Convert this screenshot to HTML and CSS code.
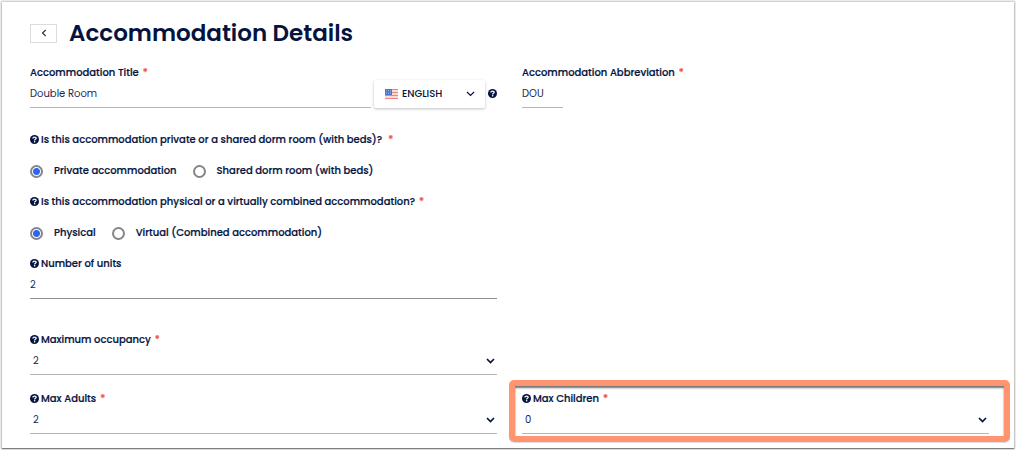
FILE: index.html
```html
<!DOCTYPE html>
<html lang="en">
<head>
<meta charset="utf-8">
<meta name="viewport" content="width=device-width, initial-scale=1">
<title>Accommodation Details</title>
<link rel="stylesheet" href="styles.css">
</head>
<body>
<svg class="defs" aria-hidden="true">
  <symbol id="help" viewBox="0 0 16 16">
    <circle cx="8" cy="8" r="8" fill="#05143f"/>
    <path d="M5 6.300C5.100 4.400 6.400 3.600 8.100 3.600c1.700 0 2.900.9 2.900 2.300C11 7.700 8.200 7.600 8.200 9.600" fill="none" stroke="#fff" stroke-width="2.300"/>
    <rect x="7" y="10.800" width="2.400" height="2.400" fill="#fff"/>
  </symbol>
  <symbol id="chevron" viewBox="0 0 9 6">
    <path d="M1 1l3.500 3.500L8 1" fill="none" stroke="currentColor" stroke-width="1.700"/>
  </symbol>
</svg>
<main class="panel">
  <header class="header">
    <button class="back" type="button" aria-label="Back">
      <svg class="back-icon" viewBox="0 0 6 8"><path d="M4.700 1L1.500 4l3.200 3" fill="none" stroke="#222b45" stroke-width="1.100"/></svg>
    </button>
    <h1 class="title">Accommodation Details</h1>
  </header>
  <form class="form">
    <div class="row">
      <div class="field">
        <label class="label" for="title">Accommodation Title <span class="req">*</span></label>
        <div class="title-line">
          <input class="input" id="title" type="text" value="Double Room">
          <button class="lang" type="button">
            <svg class="flag" viewBox="0 0 13 10">
              <rect width="13" height="10" fill="#f9dcd6"/>
              <path d="M0 .5h13M0 3.500h13M0 6.500h13M0 9.500h13" stroke="#ec8580"/>
              <rect width="7" height="6" fill="#4a74cf"/>
              <path d="M1 1.500h5M1 3h5M1 4.500h5" stroke="#9db4e6" stroke-width=".7" stroke-dasharray="1 1"/>
            </svg>
            <span class="lang-name">ENGLISH</span>
            <svg class="chevron" viewBox="0 0 9 6"><path d="M1 1l3.500 3.500L8 1" fill="none" stroke="currentColor" stroke-width="1.200"/></svg>
          </button>
          <svg class="help"><use href="#help"/></svg>
        </div>
      </div>
      <div class="field">
        <label class="label" for="abbr">Accommodation Abbreviation <span class="req">*</span></label>
        <input class="input short" id="abbr" type="text" value="DOU">
      </div>
    </div>

    <fieldset class="group first">
      <legend class="label"><svg class="help"><use href="#help"/></svg>Is this accommodation private or a shared dorm room (with beds)? <span class="req far">*</span></legend>
      <div class="options">
        <label class="option"><input class="radio" type="radio" name="kind" checked>Private accommodation</label>
        <label class="option"><input class="radio" type="radio" name="kind">Shared dorm room (with beds)</label>
      </div>
    </fieldset>
    <fieldset class="group">
      <legend class="label"><svg class="help"><use href="#help"/></svg>Is this accommodation physical or a virtually combined accommodation? <span class="req">*</span></legend>
      <div class="options">
        <label class="option"><input class="radio" type="radio" name="mode" checked>Physical</label>
        <label class="option"><input class="radio" type="radio" name="mode">Virtual (Combined accommodation)</label>
      </div>
    </fieldset>

    <div class="row units">
      <div class="field">
        <label class="label" for="units"><svg class="help"><use href="#help"/></svg>Number of units</label>
        <input class="input dark" id="units" type="text" inputmode="numeric" value="2">
      </div>
    </div>
    <div class="row occupancy">
      <div class="field">
        <label class="label" for="occupancy"><svg class="help"><use href="#help"/></svg>Maximum occupancy <span class="req">*</span></label>
        <div class="select-wrap">
          <select class="select" id="occupancy"><option>1</option><option selected>2</option><option>3</option></select>
          <svg class="chevron"><use href="#chevron"/></svg>
        </div>
      </div>
    </div>
    <div class="row guests">
      <div class="field">
        <label class="label" for="adults"><svg class="help"><use href="#help"/></svg>Max Adults <span class="req">*</span></label>
        <div class="select-wrap">
          <select class="select" id="adults"><option>1</option><option selected>2</option></select>
          <svg class="chevron"><use href="#chevron"/></svg>
        </div>
      </div>
      <div class="field highlight">
        <label class="label" for="children"><svg class="help"><use href="#help"/></svg>Max Children <span class="req">*</span></label>
        <div class="select-wrap">
          <select class="select" id="children"><option selected>0</option><option>1</option><option>2</option></select>
          <svg class="chevron"><use href="#chevron"/></svg>
        </div>
      </div>
    </div>
  </form>
</main>
</body>
</html>
```

FILE: styles.css
```css
* { box-sizing: border-box; }

body {
  margin: 0;
  padding: 2px;
  background: #fff;
  color: #05143f;
  font: 500 10px/16px Poppins, Inter, "Open Sans", sans-serif;
}

.defs { position: absolute; width: 0; height: 0; }

.panel {
  padding: 16px 25px 14px 28px;
  background: #fff;
  box-shadow: 0 0 2px 1px rgba(0, 0, 0, .25), 0 1px 1px rgba(0, 0, 0, .4);
}

.header { display: flex; align-items: center; gap: 12px; margin-bottom: 16px; }

.back {
  display: flex;
  align-items: center;
  justify-content: center;
  width: 27px;
  height: 19px;
  padding: 0;
  border: 1px solid #dcdcdc;
  background: #fff;
}
.back-icon { width: 6px; height: 8px; }

.title { margin: 0; padding-top: 1px; font-size: 23px; line-height: 29px; font-weight: 600; }

.row { display: grid; grid-template-columns: 1fr 1fr; gap: 25px; }
.units { margin-top: 14px; }
.occupancy { margin-top: 32px; }
.guests { margin-top: 15px; }

.field { position: relative; min-width: 0; }

.label {
  display: flex;
  align-items: center;
  height: 16px;
  padding: 2px 0 0;
  font-weight: 500;
  -webkit-text-stroke: 0.2px currentColor;
  white-space: nowrap;
}
.help { flex: none; width: 9px; height: 9px; margin: 0 2px 2px 0; }
.req { margin-left: 4px; color: #f0524f; }
.far { margin-left: 6px; }

.title-line { display: flex; align-items: center; gap: 3px; }
.title-line .input { flex: 1; min-width: 0; }
.title-line .help { margin: 0 0 2px; }

.input, .select {
  display: block;
  width: 100%;
  height: 28px;
  padding: 0;
  border: 0;
  border-bottom: 1px solid #b5b5b5;
  border-radius: 0;
  background: transparent;
  color: #1b2850;
  font: inherit;
  font-weight: 400;
}
.short { width: 41px; }
.dark { border-color: #8f8f8f; }

.lang {
  display: flex;
  align-items: center;
  gap: 4px;
  width: 111px;
  height: 28px;
  padding: 0 10px 0 11px;
  border: 0;
  border-radius: 2px;
  background: #fff;
  box-shadow: 0 1px 3px rgba(0, 0, 0, .25);
  color: #05143f;
  font: inherit;
}
.flag { width: 13px; height: 10px; }
.lang-name { flex: 1; text-align: left; }
.chevron { width: 9px; height: 6px; }

.group { margin: 14px 0 0; padding: 0; border: 0; }
.first { margin-top: 23px; }
.options { display: flex; gap: 16px; margin-top: 16px; }
.option {
  display: flex;
  align-items: center;
  height: 16px;
  -webkit-text-stroke: 0.2px currentColor;
}

.radio {
  appearance: none;
  width: 13px;
  height: 13px;
  margin: 0 11px 0 0;
  border: 2px solid #858585;
  border-radius: 50%;
  background: #fff;
}
.radio:checked { background: radial-gradient(circle, #2f62f5 3px, #fff 4px); }

.select-wrap { display: grid; align-items: center; }
.select-wrap > * { grid-area: 1 / 1; }
.select { appearance: none; padding-left: 3px; }
.select-wrap .chevron { justify-self: end; margin-right: 2px; pointer-events: none; }

.highlight::after {
  content: "";
  position: absolute;
  inset: -10px -21px -8px -13px;
  border: 6px solid #ff9470;
  border-radius: 5px;
  box-shadow: inset 0 2px 2px rgba(0, 0, 0, .55), 0 1px 1px rgba(0, 0, 0, .15);
  pointer-events: none;
}
```
